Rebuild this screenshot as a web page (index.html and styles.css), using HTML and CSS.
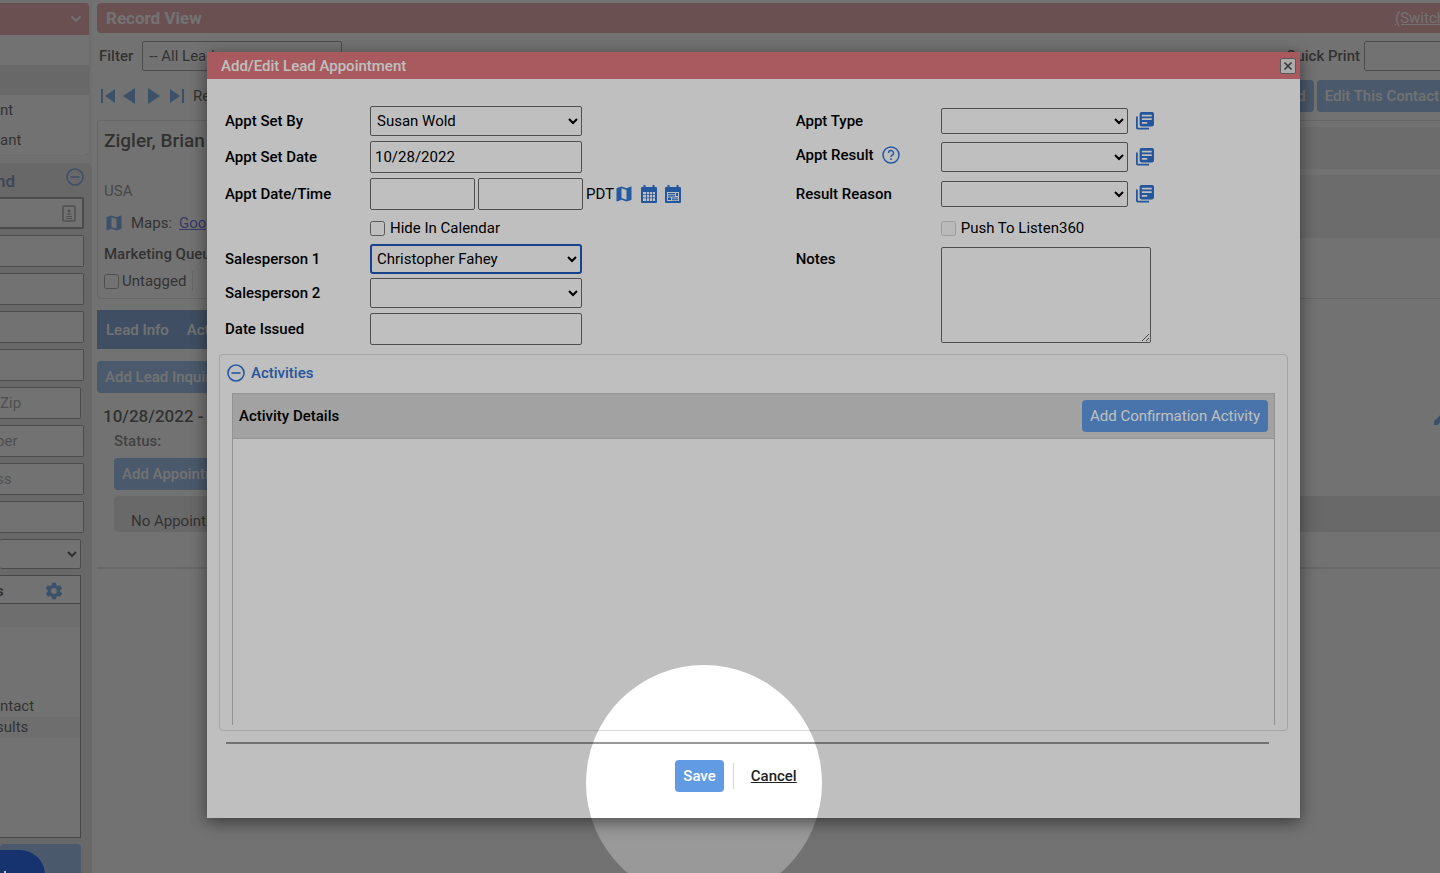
FILE: index.html
```html
<!DOCTYPE html>
<html lang="en">
  <head>
    <meta charset="utf-8">
    <title>Record View</title>
    <link rel="stylesheet" href="styles.css">
  </head>

  <body>
    <!-- shared icons -->
    <svg class="sprite" aria-hidden="true">
      <symbol id="icon-map" viewBox="0 0 24 24">
        <path d="M20.5 3l-.16.03L15 5.1 9 3 3.36 4.9c-.21.07-.36.25-.36.48V20.500c0 .28.22.5.5.5l.16-.03L9 18.900l6 2.100 5.640-1.900c.21-.07.36-.25.36-.48V3.500c0-.28-.22-.5-.5-.5zM15 19l-6-2.110V5l6 2.110V19z"/>
      </symbol>
      <symbol id="icon-list" viewBox="0 0 20 20">
        <path d="M2 5v12.500h12.500V19.500H2a2 2 0 0 1-2-2V5z"/>
        <path fill-rule="evenodd" d="M6 0h12a2 2 0 0 1 2 2v12a2 2 0 0 1-2 2H6a2 2 0 0 1-2-2V2a2 2 0 0 1 2-2zM6.500 3v2h11V3zM6.500 7v2h11V7zM6.500 11v2h6v-2z"/>
      </symbol>
      <symbol id="icon-minus" viewBox="0 0 18 18">
        <circle cx="9" cy="9" r="8" fill="none" stroke="currentColor" stroke-width="1.600"/>
        <path d="M4.500 8.200h9v1.600h-9z"/>
      </symbol>
    </svg>

    <div class="app">
      <aside class="sidebar">
        <section class="menu">
          <div class="menu-head">
            <svg class="chevron" viewBox="0 0 12 8"><path d="M1.500 1.500L6 6l4.500-4.500" fill="none" stroke="currentColor" stroke-width="1.800"/></svg>
          </div>
          <div class="menu-item"></div>
          <div class="menu-item active"></div>
          <div class="menu-item">nt</div>
          <div class="menu-item">ant</div>
        </section>

        <section class="find">
          <div class="find-head">
            <h2 class="cut">nd</h2>
            <svg class="icon-18"><use href="#icon-minus"/></svg>
          </div>
          <div class="find-search">
            <input type="text" aria-label="Name">
            <svg viewBox="0 0 14 18"><rect x="1" y="1" width="12" height="15" rx="1" fill="none" stroke="currentColor" stroke-width="1.500"/><circle cx="7" cy="6" r="1.500"/><path d="M4 9.500q3-3 6 0zM4 11h6v1H4zM4 13h6v1H4z"/></svg>
          </div>
          <input type="text" aria-label="First name">
          <input type="text" aria-label="Last name">
          <input type="text" aria-label="Address">
          <input type="text" aria-label="City">
          <input type="text" class="short" aria-label="Zip" placeholder="Zip">
          <input type="text" class="cut" aria-label="Number" placeholder="ber">
          <input type="text" class="cut" aria-label="Email address" placeholder="ss">
          <input type="text" aria-label="Company">
          <select class="short" aria-label="Type"><option></option></select>
          <div class="results">
            <div class="results-head">
              <b class="cut">s</b>
              <svg class="gear" viewBox="0 0 24 24"><path d="M19.430 12.980c.04-.32.07-.64.07-.98s-.03-.66-.07-.98l2.110-1.650c.19-.15.24-.42.12-.64l-2-3.460c-.12-.22-.39-.3-.61-.22l-2.490 1c-.52-.4-1.080-.73-1.690-.98l-.38-2.650C14.460 2.180 14.250 2 14 2h-4c-.25 0-.46.18-.49.42l-.38 2.650c-.61.25-1.170.59-1.690.98l-2.490-1c-.23-.09-.49 0-.61.22l-2 3.460c-.13.22-.07.49.12.64l2.110 1.650c-.04.32-.07.65-.07.98s.03.66.07.98l-2.110 1.650c-.19.15-.24.42-.12.64l2 3.460c.12.22.39.3.61.22l2.490-1c.52.4 1.080.73 1.690.98l.38 2.650c.03.24.24.42.49.42h4c.25 0 .46-.18.49-.42l.38-2.650c.61-.25 1.170-.59 1.690-.98l2.490 1c.23.09.49 0 .61-.22l2-3.460c.12-.22.07-.49-.12-.64l-2.110-1.650zM12 15.500c-1.930 0-3.500-1.570-3.500-3.500s1.570-3.500 3.500-3.500 3.500 1.570 3.500 3.500-1.570 3.500-3.500 3.500z"/></svg>
            </div>
            <ul>
              <li class="odd"></li>
              <li></li>
              <li></li>
              <li></li>
              <li>ntact</li>
              <li class="odd cut">sults</li>
            </ul>
          </div>
          <button type="button" class="btn find-btn" aria-label="Find"></button>
        </section>
      </aside>

      <main class="record">
        <header class="record-head">
          <h1>Record View</h1>
          <a href="#">(Switch</a>
        </header>

        <div class="filter-row">
          <label for="filter">Filter</label>
          <select id="filter" class="filter"><option>-- All Leads --</option></select>
          <label for="print" class="push">Quick Print</label>
          <select id="print" class="print"><option></option></select>
        </div>

        <div class="toolbar">
          <svg class="pager" viewBox="0 0 84 16">
            <path d="M0 1h2v14H0zM14 1v14L4 8zM34 0v16L22 8zM47 0v16l12-8zM69 1v14l10-7zM81 1h2v14h-2z"/>
          </svg>
          <span>Record</span>
          <button type="button" class="btn push">Add Lead</button>
          <button type="button" class="btn edit">Edit This Contact</button>
        </div>

        <section class="contact">
          <div class="contact-info">
            <h2>Zigler, Brian</h2>
            <p class="country">USA</p>
            <p class="maps"><svg class="icon-20"><use href="#icon-map"/></svg> Maps: <a href="#">Google</a></p>
            <p class="queue">Marketing Queue</p>
            <label class="untagged"><input type="checkbox"> Untagged</label>
          </div>
          <div class="contact-strips">
            <div class="strip"></div>
            <div class="strip tall"></div>
          </div>
        </section>

        <nav class="tabs">
          <a href="#">Lead Info</a>
          <a href="#">Activities</a>
        </nav>

        <section class="lead">
          <button type="button" class="btn">Add Lead Inquiry</button>
          <div class="lead-title">
            <h3>10/28/2022 -</h3>
            <svg class="pencil" viewBox="0 0 18 18"><path d="M0 14.300V18h3.700L14.800 6.900l-3.700-3.700zM17.700 4a1 1 0 0 0 0-1.400L15.400.3a1 1 0 0 0-1.400 0l-1.800 1.800 3.700 3.700z"/></svg>
          </div>
          <div class="lead-body">
            <p class="status">Status:</p>
            <button type="button" class="btn">Add Appointment</button>
            <p class="empty">No Appointments</p>
          </div>
        </section>
      </main>
    </div>

    <div class="backdrop"></div>

    <div class="modal" role="dialog" aria-labelledby="modal-title">
      <header class="modal-head">
        <h2 id="modal-title">Add/Edit Lead Appointment</h2>
        <button type="button" class="close" aria-label="Close">
          <svg viewBox="0 0 10 10"><path d="M1.500 1.500l7 7M8.500 1.500l-7 7" stroke="currentColor" stroke-width="1.500"/></svg>
        </button>
      </header>

      <form class="appt">
        <label for="set-by">Appt Set By</label>
        <div class="field"><select id="set-by" class="wide"><option>Susan Wold</option></select></div>
        <label for="type">Appt Type</label>
        <div class="field">
          <select id="type" class="medium slim"><option></option></select>
          <svg class="icon-list"><use href="#icon-list"/></svg>
        </div>

        <label for="set-date">Appt Set Date</label>
        <div class="field"><input type="text" id="set-date" class="wide" value="10/28/2022"></div>
        <div class="label-help">
          <label for="result">Appt Result</label>
          <svg class="icon-18" viewBox="0 0 18 18"><circle cx="9" cy="9" r="8" fill="none" stroke="currentColor" stroke-width="1.500"/><path d="M6.500 7a2.500 2.500 0 1 1 3.700 2.200c-.8.5-1.200.9-1.200 1.900" fill="none" stroke="currentColor" stroke-width="1.400"/><path d="M8.200 12.300h1.600v1.600H8.200z"/></svg>
        </div>
        <div class="field">
          <select id="result" class="medium"><option></option></select>
          <svg class="icon-list"><use href="#icon-list"/></svg>
        </div>

        <label for="date">Appt Date/Time</label>
        <div class="field">
          <input type="text" id="date" class="half">
          <input type="text" class="half" aria-label="Appt time">
          <span class="zone">PDT<svg class="icon-20"><use href="#icon-map"/></svg></span>
          <svg class="cal" viewBox="0 0 16 18"><path fill-rule="evenodd" d="M2.500 0h2v2h7V0h2v2H15a1 1 0 0 1 1 1v14a1 1 0 0 1-1 1H1a1 1 0 0 1-1-1V3a1 1 0 0 1 1-1h1.500zM2 7v9h12V7z"/><path d="M2 9.300h12v.8H2zM2 12.500h12v.8H2zM5 7h.8v9H5zM8 7h.8v9H8zM11 7h.8v9H11z"/></svg>
          <svg class="cal" viewBox="0 0 16 18"><path fill-rule="evenodd" d="M2.500 0h2v2h7V0h2v2H15a1 1 0 0 1 1 1v14a1 1 0 0 1-1 1H1a1 1 0 0 1-1-1V3a1 1 0 0 1 1-1h1.500zM2 7v9h12V7z"/><path d="M3 8h7v1.200H3zM11 8h2v3h-2zM3 10.300h7v1.200H3zM3 12.500h3v2.500H3zM7 12.500h6v1H7zM7 14.300h6v1H7z"/></svg>
        </div>
        <label for="reason">Result Reason</label>
        <div class="field">
          <select id="reason" class="medium slim"><option></option></select>
          <svg class="icon-list"><use href="#icon-list"/></svg>
        </div>

        <label class="check left"><input type="checkbox"> Hide In Calendar</label>
        <label class="check right"><input type="checkbox" disabled> Push To Listen360</label>

        <label for="sales1">Salesperson 1</label>
        <div class="field"><select id="sales1" class="wide focused"><option>Christopher Fahey</option></select></div>
        <label for="notes">Notes</label>
        <textarea id="notes"></textarea>

        <label for="sales2" class="first">Salesperson 2</label>
        <div class="field"><select id="sales2" class="wide"><option></option></select></div>

        <label for="issued" class="first">Date Issued</label>
        <div class="field"><input type="text" id="issued" class="wide"></div>
      </form>

      <section class="activities">
        <h3><svg class="icon-18"><use href="#icon-minus"/></svg> Activities</h3>
        <div class="details">
          <div class="details-head">
            <h4>Activity Details</h4>
            <button type="button" class="btn">Add Confirmation Activity</button>
          </div>
        </div>
      </section>

      <footer class="actions">
        <button type="button" class="btn save">Save</button>
        <a href="#" class="cancel">Cancel</a>
      </footer>
    </div>

    <button type="button" class="chat" aria-label="Chat">
      <svg viewBox="0 0 10 12"><path d="M4 2h2v10H4z"/></svg>
    </button>
    <div class="spotlight"></div>
  </body>
</html>
```

FILE: styles.css
```css
* {
  box-sizing: border-box;
}

body {
  margin: 0;
  height: 100vh;
  overflow: hidden;
  position: relative;
  background-color: white;
  color: black;
  font-family: Roboto, "Liberation Sans", sans-serif;
  font-size: 15px;
  line-height: 20px;
}

h1,
h2,
h3,
h4,
p,
ul {
  margin: 0;
  padding: 0;
}

svg {
  display: block;
  flex: none;
  fill: currentColor;
}

input,
select,
textarea,
button {
  font: inherit;
  color: inherit;
}

input[type="text"],
select,
textarea {
  height: 32px;
  border: 1px solid #6a6a6a;
  border-radius: 2px;
  background-color: white;
  padding: 0 4px;
}

select {
  height: 30px;
  padding: 0 2px;
}

input[type="checkbox"] {
  width: 15px;
  height: 15px;
  margin: 0;
}

.sprite {
  position: absolute;
  width: 0;
  height: 0;
}

.icon-18 {
  width: 18px;
  height: 18px;
  color: #3178d8;
}

.icon-20 {
  width: 20px;
  height: 20px;
  color: #3178d8;
}

.btn {
  height: 32px;
  padding: 0 8px;
  border: none;
  border-radius: 4px;
  background-color: #619be4;
  color: white;
  font-weight: 500;
  white-space: nowrap;
  cursor: pointer;
}

.push {
  margin-left: auto;
}

/* page behind the dialog */
.app {
  display: flex;
  height: 100%;
}

.sidebar {
  display: flex;
  flex-direction: column;
  flex: none;
  width: 92px;
  padding-top: 3px;
  background-color: #f0f0f0;
}

.menu {
  flex: none;
  width: 90px;
  height: 153px;
  margin-bottom: 7px;
  border: solid #e4e4e4;
  border-width: 0 1px 1px 0;
  border-radius: 0 4px 6px 0;
  background-color: white;
  overflow: hidden;
}

.menu-head {
  display: flex;
  align-items: center;
  justify-content: flex-end;
  height: 32px;
  padding-right: 7px;
  background-color: #e0797e;
  color: white;
}

.chevron {
  width: 12px;
  height: 8px;
}

.menu-item {
  height: 30px;
  line-height: 30px;
}

.menu-item.active {
  background-color: #d5d5d5;
}

.find {
  display: flex;
  flex: 1;
  flex-direction: column;
  gap: 6px;
  min-height: 0;
  padding-right: 8px;
  border-radius: 0 6px 0 0;
  background-color: #d5d5d5;
}

.find > input[type="text"],
.find-search input[type="text"] {
  flex: none;
  width: 100%;
  padding: 0;
  border-left: none;
  border-radius: 0 2px 2px 0;
}

.find > input.short[type="text"],
select.short {
  width: 81px;
}

.find select {
  flex: none;
  border-left: none;
}

/* text scrolled off the left edge */
.cut {
  text-indent: -4px;
}

.find-head {
  display: flex;
  flex: none;
  align-items: center;
  justify-content: space-between;
  height: 28px;
}

.find-head h2 {
  padding-top: 8px;
  color: #274f8c;
  font-size: 17px;
  font-weight: 500;
}

.find-search {
  position: relative;
}

.find-search input[type="text"] {
  display: block;
  border-width: 2px;
}

.find-search svg {
  position: absolute;
  top: 8px;
  right: 8px;
  width: 14px;
  height: 18px;
  color: #777;
}

.results {
  flex: none;
  width: 81px;
  height: 263px;
  border: 1px solid #555;
  border-left: none;
  background-color: white;
}

.results-head {
  display: flex;
  align-items: center;
  justify-content: space-between;
  height: 28px;
  padding: 2px 16px 0 0;
  border-bottom: 1px solid #555;
}

.gear {
  width: 20px;
  height: 20px;
  color: #3178d8;
}

.results ul {
  list-style: none;
}

.results li {
  height: 21px;
  line-height: 21px;
}

.results li:empty {
  height: 23px;
}

.results li.odd {
  background-color: #ececec;
}

.find-btn {
  flex: none;
  width: 81px;
}

.record {
  display: flex;
  flex: 1;
  flex-direction: column;
  min-width: 0;
  padding: 3px 0 0 5px;
}

.record-head {
  display: flex;
  flex: none;
  align-items: center;
  justify-content: space-between;
  height: 30px;
  padding-left: 9px;
  border-radius: 4px 0 0 4px;
  background-color: #e0797e;
  color: white;
}

.record-head h1 {
  font-size: 17px;
  font-weight: 700;
}

.record-head a {
  margin-right: -5px;
  color: white;
}

.filter-row {
  display: flex;
  flex: none;
  align-items: center;
  height: 46px;
  padding-left: 2px;
  font-weight: 500;
}

.filter-row select {
  flex: none;
  font-weight: 400;
}

.filter {
  width: 200px;
  margin-left: 9px;
}

/* runs past the right edge of the window */
.print {
  width: 200px;
  margin-left: 4px;
  margin-right: -124px;
}

.toolbar {
  display: flex;
  flex: none;
  align-items: center;
  gap: 3px;
  height: 34px;
  padding-left: 4px;
}

.pager {
  width: 84px;
  height: 16px;
  margin-right: 5px;
  color: #3178d8;
}

.edit {
  border-radius: 4px 0 0 4px;
  padding-right: 1px;
}

.contact {
  display: flex;
  flex: none;
  height: 179px;
  margin-top: 7px;
  border: solid #d0d0d0;
  border-width: 1px 0 1px 1px;
  border-radius: 4px 0 0 4px;
}

.contact-info {
  width: 300px;
  padding: 10px 0 0 6px;
}

.contact-info h2 {
  font-size: 19px;
  font-weight: 500;
}

.country {
  margin-top: 30px;
  color: #555;
}

.maps {
  display: flex;
  align-items: center;
  gap: 7px;
  margin-top: 12px;
}

.maps a {
  color: #2020d0;
}

.queue {
  margin-top: 11px;
  font-weight: 500;
}

.untagged {
  display: flex;
  align-items: center;
  gap: 3px;
  width: 89px;
  margin-top: 7px;
  border-right: 1px solid #d0d0d0;
}

.contact-strips {
  flex: 1;
  padding-top: 6px;
}

.strip {
  height: 42px;
  margin-bottom: 6px;
  background-color: #e6e6e6;
}

.strip.tall {
  height: 63px;
}

.tabs {
  display: flex;
  flex: none;
  gap: 18px;
  width: 60%;
  margin-top: 11px;
  padding: 10px 9px 9px;
  background-color: #3873c2;
}

.tabs a {
  color: white;
  font-weight: 500;
  text-decoration: none;
}

.lead {
  height: 220px;
  padding-top: 12px;
  border-bottom: 2px solid #d5d5d5;
}

.lead-title {
  display: flex;
  align-items: center;
  justify-content: space-between;
  padding: 13px 0 0 6px;
}

.lead-title h3 {
  font-size: 17px;
  font-weight: 500;
}

.pencil {
  width: 18px;
  height: 18px;
  margin-right: -12px;
  color: #3178d8;
}

.lead-body {
  padding: 5px 0 0 17px;
}

.status {
  margin-bottom: 7px;
  color: #444;
  font-weight: 500;
}

.empty {
  height: 36px;
  margin-top: 6px;
  padding: 15px 0 0 17px;
  border-radius: 4px 0 0 4px;
  background-color: #d8d8d8;
}

.backdrop {
  position: absolute;
  inset: 0;
  background-color: rgba(100, 100, 100, 0.66);
}

/* appointment dialog */
.modal {
  position: absolute;
  top: 52px;
  left: 207px;
  right: 140px;
  background-color: white;
  box-shadow: 0 4px 16px rgba(0, 0, 0, 0.5);
}

.modal-head {
  display: flex;
  align-items: center;
  justify-content: space-between;
  height: 27px;
  padding: 0 4px 0 14px;
  background-color: #e0797e;
  color: white;
}

.modal-head h2 {
  font-size: 15px;
  font-weight: 500;
}

.close {
  display: flex;
  align-items: center;
  justify-content: center;
  width: 16px;
  height: 16px;
  padding: 0;
  border: 1px solid #777;
  border-radius: 2px;
  background-color: #e4e4e4;
  color: #444;
}

.close svg {
  width: 10px;
  height: 10px;
}

.appt {
  display: grid;
  grid-template-columns: 145px 11fr 145px 9fr;
  grid-template-rows: 34px 37px 38px 30px 32px 36px 35px;
  align-items: center;
  padding: 25px 11px 0 18px;
}

.appt label {
  font-weight: 500;
}

.first {
  grid-column: 1;
}

.field {
  display: flex;
  align-items: center;
}

.wide {
  width: 212px;
}

.half {
  width: 105px;
  margin-right: 3px;
}

.medium {
  width: 187px;
  margin-right: 8px;
}

select.slim {
  height: 26px;
}

select.focused {
  border: 2px solid #2058b8;
  border-radius: 3px;
  padding: 0 1px;
}

.icon-list {
  width: 18px;
  height: 18px;
  color: #2f73d0;
}

.label-help {
  display: flex;
  align-items: center;
  gap: 9px;
  padding-bottom: 4px;
}

.zone {
  display: flex;
  align-items: center;
  margin-right: 7px;
}

.cal {
  width: 16px;
  height: 18px;
  margin-right: 8px;
  color: #2f73d0;
}

.appt .check {
  display: flex;
  align-items: center;
  gap: 5px;
  font-weight: 400;
}

.check.left {
  grid-column: 2;
}

.check.right {
  grid-column: 4;
}

textarea {
  grid-row: 5 / span 3;
  grid-column: 4;
  align-self: start;
  width: 210px;
  height: 96px;
  margin-top: 4px;
}

.activities {
  height: 377px;
  margin: 8px 12px 0;
  padding: 8px 12px 6px;
  border: 1px solid #dcdcdc;
  border-radius: 4px;
}

.activities h3 {
  display: flex;
  align-items: center;
  gap: 6px;
  margin-left: -5px;
  color: #2f73d0;
  font-size: 15px;
  font-weight: 500;
}

.details {
  height: 332px;
  margin-top: 10px;
  border: 1px solid #c4c4c4;
  border-bottom: none;
}

.details-head {
  display: flex;
  align-items: center;
  justify-content: space-between;
  height: 45px;
  padding: 0 6px;
  border-bottom: 1px solid #c4c4c4;
  background-color: #d8d8d8;
}

.details-head h4 {
  font-weight: 500;
}

.details-head .btn {
  font-weight: 400;
}

.actions {
  display: flex;
  align-items: center;
  justify-content: center;
  height: 76px;
  margin: 11px 31px 0 19px;
  padding: 0 23px 10px 0;
  border-top: 2px solid #999;
}

.save {
  margin-right: 9px;
}

.cancel {
  padding: 3px 0 3px 17px;
  border-left: 1px solid #d8d8d8;
  color: #222;
  font-weight: 500;
}

.chat {
  position: absolute;
  left: -25px;
  top: 850px;
  width: 70px;
  height: 50px;
  padding: 0 0 0 25px;
  border: none;
  border-radius: 25px;
  background-color: #1f4594;
  color: white;
}

.chat svg {
  width: 10px;
  height: 12px;
}

/* tour step: darkens everything but the Save and Cancel area */
.spotlight {
  position: absolute;
  left: 586px;
  top: 665px;
  width: 236px;
  height: 236px;
  border-radius: 50%;
  box-shadow: 0 0 0 1600px rgba(0, 0, 0, 0.25);
  pointer-events: none;
}
```
